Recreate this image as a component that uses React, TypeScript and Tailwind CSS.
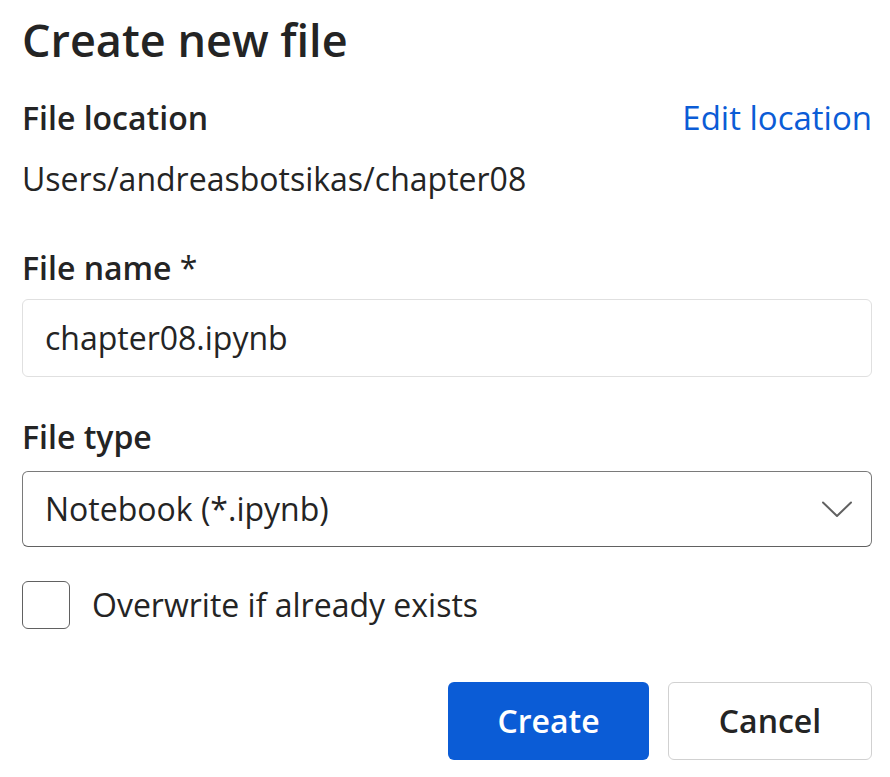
import React from "react";

export default function App() {
  return (
    <div
      className="w-[890px] h-[777px] bg-white pl-[22px] pr-[18px] pt-[12px] text-[#242424]"
      style={{ fontFamily: '"Open Sans", "Noto Sans", sans-serif' }}
    >
      <h1 className="text-[45px] leading-[56px] font-semibold">Create new file</h1>

      <div className="mt-[30px] flex justify-between items-start">
        <div className="text-[32px] leading-[40px] font-semibold">File location</div>
        <a className="text-[33px] leading-[40px] text-[#0b5cd6] cursor-pointer">Edit location</a>
      </div>
      <div className="mt-[21px] text-[32px] leading-[40px]">Users/andreasbotsikas/chapter08</div>

      <div className="mt-[49px] text-[32px] leading-[40px] font-semibold">
        File name <span className="font-normal">*</span>
      </div>
      <div className="mt-[11px] h-[78px] border-[1.5px] border-[#e0e0e0] rounded-[6px] flex items-center px-[22px] text-[32px]">
        chapter08.ipynb
      </div>

      <div className="mt-[40px] text-[32px] leading-[40px] font-semibold">File type</div>
      <div className="mt-[14px] h-[76px] border-[1.5px] border-[#7a7a7a] border-b-[#616161] rounded-[6px] flex items-center justify-between pl-[22px] pr-[19px] text-[32px]">
        <span>Notebook (*.ipynb)</span>
        <svg width="30" height="17" viewBox="0 0 30 17" fill="none">
          <path d="M1 1.5 L15 15 L29 1.5" stroke="#616161" strokeWidth="2" strokeLinecap="round" strokeLinejoin="round" />
        </svg>
      </div>

      <div className="mt-[34px] flex items-center gap-[22px]">
        <div className="w-[48px] h-[48px] border-[1.5px] border-[#616161] rounded-[6px]" />
        <span className="text-[32px] leading-[40px]">Overwrite if already exists</span>
      </div>

      <div className="mt-[53px] flex justify-end gap-[19px]">
        <button className="w-[201px] h-[78px] rounded-[6px] bg-[#0b5cd6] text-white text-[32px] font-semibold">
          Create
        </button>
        <button className="w-[204px] h-[78px] rounded-[6px] border-[1.5px] border-[#d1d1d1] bg-white text-[32px] font-semibold text-[#242424]">
          Cancel
        </button>
      </div>
    </div>
  );
}
